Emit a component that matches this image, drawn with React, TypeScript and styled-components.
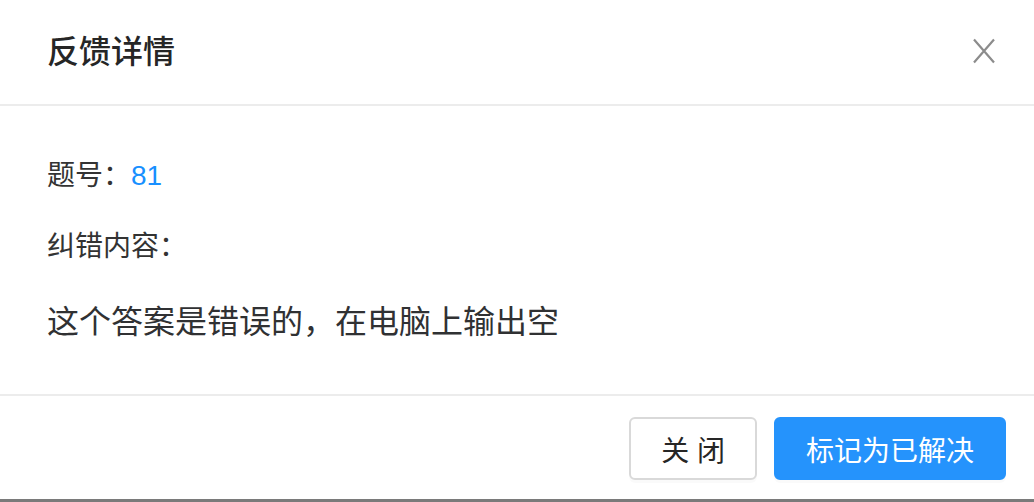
import React from 'react'
import styled, { createGlobalStyle } from 'styled-components'

const GlobalStyle = createGlobalStyle`
  html, body {
    margin: 0;
    padding: 0;
    background: #fff;
  }
  body {
    font-family: "Liberation Sans", "Noto Sans CJK SC", sans-serif;
    color: #333;
  }
`

const Modal = styled.div`
  width: 1034px;
  height: 502px;
  box-sizing: border-box;
  display: flex;
  flex-direction: column;
  background: #fff;
  border-bottom: 3px solid #7a7a7a;
`

const Header = styled.div`
  height: 104px;
  display: flex;
  align-items: center;
  justify-content: space-between;
  padding: 0 38px 0 47px;
  border-bottom: 2px solid #ececec;
`

const Title = styled.h2`
  margin: 0;
  font-size: 32px;
  line-height: 44px;
  font-weight: 500;
  color: #262626;
`

const CloseButton = styled.button`
  display: flex;
  align-items: center;
  justify-content: center;
  width: 24px;
  height: 26px;
  padding: 0;
  border: none;
  background: none;
  cursor: pointer;
  margin-top: -2px;
`

const Body = styled.div`
  flex: 1;
  display: flex;
  flex-direction: column;
  gap: 27px;
  padding: 48px 47px 0;
  border-bottom: 2px solid #ececec;
`

const Field = styled.div`
  font-size: 28px;
  line-height: 44px;
  color: #333;
`

const Number = styled.span`
  color: #1890ff;
`

const Content = styled.p`
  margin: 2px 0 0;
  font-size: 32px;
  line-height: 48px;
  color: #303133;
`

const Footer = styled.div`
  display: flex;
  justify-content: flex-end;
  gap: 17px;
  padding: 21px 28px 19px;
`

const Button = styled.button<{ $primary?: boolean }>`
  height: 63px;
  padding: 0 30px;
  border-radius: 6px;
  font-family: "Liberation Sans", "Noto Sans CJK SC", sans-serif;
  font-size: 28px;
  cursor: pointer;
  box-shadow: 0 3px 0 rgba(0, 0, 0, 0.02);
  border: 2px solid ${p => (p.$primary ? '#2593fc' : '#d9d9d9')};
  background: ${p => (p.$primary ? '#2593fc' : '#fff')};
  color: ${p => (p.$primary ? '#fff' : '#262626')};
`

const CloseIcon = () => (
  <svg width="24" height="26" viewBox="0 0 24 26">
    <path d="M2 1.5 L22 24.5 M22 1.5 L2 24.5" stroke="#8c8c8c" strokeWidth="2.2" fill="none" />
  </svg>
)

export default function App() {
  return (
    <>
      <GlobalStyle />
      <Modal>
        <Header>
          <Title>反馈详情</Title>
          <CloseButton aria-label="close">
            <CloseIcon />
          </CloseButton>
        </Header>
        <Body>
          <Field>
            题号：<Number>81</Number>
          </Field>
          <Field>纠错内容：</Field>
          <Content>这个答案是错误的，在电脑上输出空</Content>
        </Body>
        <Footer>
          <Button>关 闭</Button>
          <Button $primary>标记为已解决</Button>
        </Footer>
      </Modal>
    </>
  )
}
